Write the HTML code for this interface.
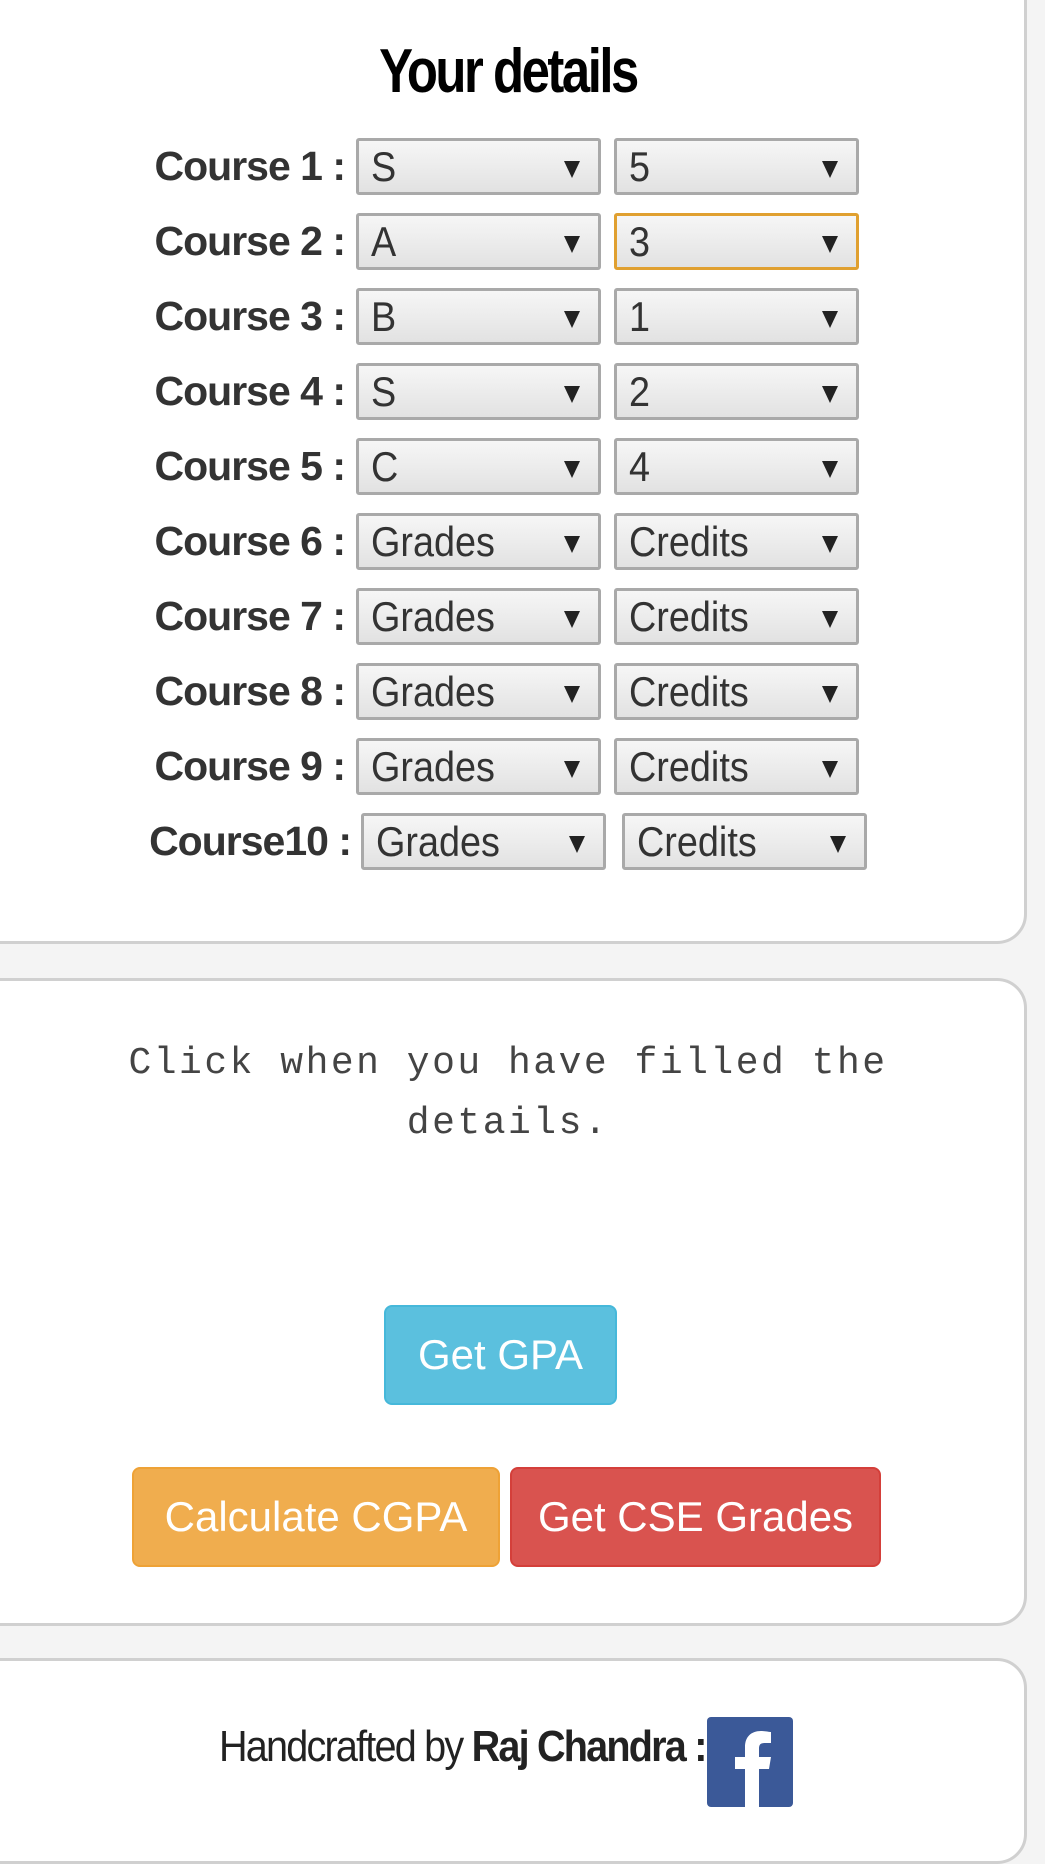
<!DOCTYPE html>
<html><head><meta charset="utf-8"><style>
body{margin:0;width:1045px;height:1798px;background:#f4f4f4;position:relative;overflow:hidden;font-family:"Liberation Sans",sans-serif;}
.card{position:absolute;left:-30px;width:1051px;background:#fff;border:3px solid #d0d0d0;border-radius:30px;}
.title{position:absolute;left:0;width:1016px;top:36px;text-align:center;font-size:62px;font-weight:bold;color:#000;letter-spacing:-3px;transform:scaleX(0.82);transform-origin:508px 0;}
.lab{position:absolute;width:345px;left:0;text-align:right;font-size:41px;font-weight:bold;color:#333;letter-spacing:-1px;line-height:57px;}
.sel{position:absolute;height:51px;width:227px;border:3px solid #a9a9a9;border-radius:3px;background:linear-gradient(#f6f6f6,#e2e2e2);font-size:42px;color:#333;line-height:52px;padding-left:12px;box-sizing:content-box;}
.sel::after{content:"";position:absolute;right:18px;top:20px;border-left:8px solid transparent;border-right:8px solid transparent;border-top:17px solid #222;}
.sel span{display:inline-block;transform:scaleX(0.9);transform-origin:0 0;}
.foc{border-color:#e0a030;}
.mono{position:absolute;left:0;width:1016px;text-align:center;font-family:"Liberation Mono",monospace;font-size:38px;letter-spacing:2.5px;color:#444;}
.btn{position:absolute;color:#fff;font-size:42px;text-align:center;border-radius:8px;box-sizing:border-box;line-height:96px;}
</style></head><body>
<div class="card" style="top:-40px;height:978px;"></div>
<div class="title">Your details</div>

<div class="lab" style="top:138px">Course 1 :</div>
<div class="sel" style="left:356px;top:138px"><span>S</span></div>
<div class="sel" style="left:614px;top:138px"><span>5</span></div>

<div class="lab" style="top:213px">Course 2 :</div>
<div class="sel" style="left:356px;top:213px"><span>A</span></div>
<div class="sel foc" style="left:614px;top:213px"><span>3</span></div>

<div class="lab" style="top:288px">Course 3 :</div>
<div class="sel" style="left:356px;top:288px"><span>B</span></div>
<div class="sel" style="left:614px;top:288px"><span>1</span></div>

<div class="lab" style="top:363px">Course 4 :</div>
<div class="sel" style="left:356px;top:363px"><span>S</span></div>
<div class="sel" style="left:614px;top:363px"><span>2</span></div>

<div class="lab" style="top:438px">Course 5 :</div>
<div class="sel" style="left:356px;top:438px"><span>C</span></div>
<div class="sel" style="left:614px;top:438px"><span>4</span></div>

<div class="lab" style="top:513px">Course 6 :</div>
<div class="sel" style="left:356px;top:513px"><span>Grades</span></div>
<div class="sel" style="left:614px;top:513px"><span>Credits</span></div>

<div class="lab" style="top:588px">Course 7 :</div>
<div class="sel" style="left:356px;top:588px"><span>Grades</span></div>
<div class="sel" style="left:614px;top:588px"><span>Credits</span></div>

<div class="lab" style="top:663px">Course 8 :</div>
<div class="sel" style="left:356px;top:663px"><span>Grades</span></div>
<div class="sel" style="left:614px;top:663px"><span>Credits</span></div>

<div class="lab" style="top:738px">Course 9 :</div>
<div class="sel" style="left:356px;top:738px"><span>Grades</span></div>
<div class="sel" style="left:614px;top:738px"><span>Credits</span></div>

<div class="lab" style="top:813px;width:351px">Course10 :</div>
<div class="sel" style="left:361px;top:813px"><span>Grades</span></div>
<div class="sel" style="left:622px;top:813px"><span>Credits</span></div>

<div class="card" style="top:978px;height:642px;"></div>
<div class="mono" style="top:1042px">Click when you have filled the</div>
<div class="mono" style="top:1102px">details.</div>
<div class="btn" style="left:384px;top:1305px;width:233px;height:100px;background:#5bc0de;border:2px solid #46b8da;">Get GPA</div>
<div class="btn" style="left:132px;top:1467px;width:368px;height:100px;background:#f0ad4e;border:2px solid #eea236;">Calculate CGPA</div>
<div class="btn" style="left:510px;top:1467px;width:371px;height:100px;background:#d9534f;border:2px solid #d43f3a;">Get CSE Grades</div>

<div class="card" style="top:1658px;height:200px;"></div>
<div style="position:absolute;left:219px;top:1722px;font-size:44px;font-weight:bold;color:#222;letter-spacing:-2px;transform:scaleX(0.9);transform-origin:0 0;white-space:nowrap;"><span style="font-weight:normal">Handcrafted by</span> Raj Chandra :</div>
<div style="position:absolute;left:707px;top:1717px;width:86px;height:90px;background:#3b5998;border-radius:4px;overflow:hidden;">
<svg width="86" height="90" viewBox="0 0 86 90"><path d="M38 90V52H28V40H38V30C38 20 44 14 54 14C58 14 62 15 64 15V26H58C53 26 52 28 52 32V40H64L62 52H52V90Z" fill="#fff"/></svg>
</div>
</body></html>
